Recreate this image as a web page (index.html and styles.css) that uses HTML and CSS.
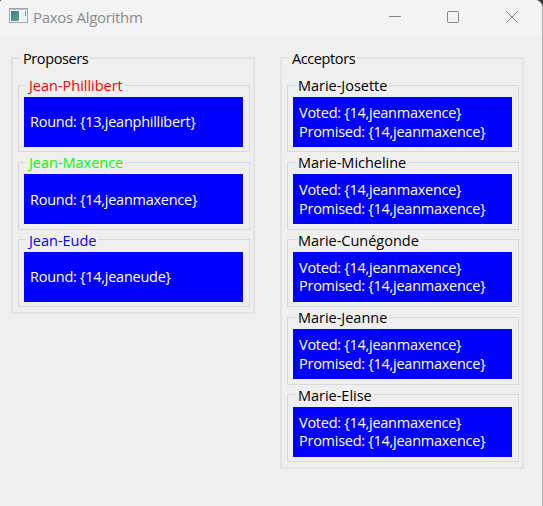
FILE: index.html
```html
<!DOCTYPE html>
<html lang="en">
<head>
<meta charset="utf-8">
<title>Paxos Algorithm</title>
<link rel="stylesheet" href="styles.css">
</head>
<body>
<div class="window">
  <header class="titlebar">
    <svg class="app-icon" width="19" height="15" viewBox="0 0 19 15">
      <defs><linearGradient id="g" x2="1" y2="1"><stop offset="0" stop-color="#3d7199"/><stop offset="1" stop-color="#62ab83"/></linearGradient></defs>
      <rect x=".5" y=".5" width="18" height="14" fill="#fafcfc" stroke="#9ba5ad"/>
      <path d="M1 1.5h17" stroke="#b4bec6"/>
      <rect x="2" y="3" width="8" height="10" fill="url(#g)"/>
      <rect x="11.5" y="3" width="5.5" height="10" fill="#edf3f5"/>
      <path d="M16.5 3v5" stroke="#5fa38d"/>
    </svg>
    <h1 class="title"><span>Paxos Algorithm</span></h1>
    <svg class="controls" width="134" height="14" viewBox="0 0 134 14" fill="none" stroke="#858585">
      <path d="M1 6.5h12"/>
      <rect x="59.5" y="1.5" width="11" height="11" rx="1"/>
      <path d="M118.2 1.2l11.6 11.6M129.8 1.2L118.2 12.8"/>
    </svg>
  </header>
  <main class="columns">
    <fieldset class="group">
      <legend>Proposers</legend>
      <fieldset class="node"><legend class="red">Jean-Phillibert</legend><div class="state"><span>Round: {13,jeanphillibert}</span></div></fieldset>
      <fieldset class="node"><legend class="green">Jean-Maxence</legend><div class="state"><span>Round: {14,jeanmaxence}</span></div></fieldset>
      <fieldset class="node"><legend class="blue">Jean-Eude</legend><div class="state"><span>Round: {14,jeaneude}</span></div></fieldset>
    </fieldset>
    <fieldset class="group">
      <legend>Acceptors</legend>
      <fieldset class="node"><legend>Marie-Josette</legend><div class="state"><span>Voted: {14,jeanmaxence}</span><span>Promised: {14,jeanmaxence}</span></div></fieldset>
      <fieldset class="node"><legend>Marie-Micheline</legend><div class="state"><span>Voted: {14,jeanmaxence}</span><span>Promised: {14,jeanmaxence}</span></div></fieldset>
      <fieldset class="node"><legend>Marie-Cunégonde</legend><div class="state"><span>Voted: {14,jeanmaxence}</span><span>Promised: {14,jeanmaxence}</span></div></fieldset>
      <fieldset class="node"><legend>Marie-Jeanne</legend><div class="state"><span>Voted: {14,jeanmaxence}</span><span>Promised: {14,jeanmaxence}</span></div></fieldset>
      <fieldset class="node"><legend>Marie-Elise</legend><div class="state"><span>Voted: {14,jeanmaxence}</span><span>Promised: {14,jeanmaxence}</span></div></fieldset>
    </fieldset>
  </main>
</div>
</body>
</html>
```
FILE: styles.css
```css
* { box-sizing: border-box; }
body {
  margin: 0;
  background: #3a3a3e;
  font: 14.5px/20px "Open Sans", "Noto Sans", sans-serif;
  color: #000;
}
.window {
  height: 506px;
  background: #efefef;
  border-right: 1px solid #b0b0b0;
  border-radius: 3px 8px 0 0;
  overflow: hidden;
}
.titlebar {
  display: flex;
  align-items: center;
  height: 36px;
  padding: 0 20px 3px 9px;
  background: #f3f3f3;
}
.title {
  flex: 1;
  margin: 0 0 0 5px;
  font-size: 15px;
  font-weight: 400;
  letter-spacing: -0.3px;
  color: #8b8b8b;
}
.app-icon { flex: none; margin-top: -2px; }
.controls { flex: none; }
.columns {
  display: flex;
  align-items: flex-start;
  gap: 25px;
  padding: 12px 0 0 11px;
}
fieldset { margin: 0; min-width: 0; }
legend {
  height: 20px;
  padding: 0 2px 0 3px;
  line-height: 21px;
  white-space: nowrap;
}
.group {
  width: 244px;
  padding: 7px 5px 5px;
  border: 2px solid #e3e3e3;
}
.group > legend {
  margin-left: 2px;
  letter-spacing: -0.4px;
}
.node {
  width: 232px;
  height: 77.4px;
  padding: 2px 5px 0;
  border: 1px solid #d9d9d9;
}
.node > legend {
  margin-left: 2px;
  letter-spacing: -0.02px;
}
.state {
  display: flex;
  flex-direction: column;
  justify-content: center;
  width: 219px;
  height: 50px;
  padding: 1px 0 0 6px;
  background: #00f;
  color: #fff;
  line-height: 18.5px;
  letter-spacing: -0.26px;
  white-space: nowrap;
}
.red { color: #f00; }
.green { color: #0f0; }
.blue { color: #00f; }
```
